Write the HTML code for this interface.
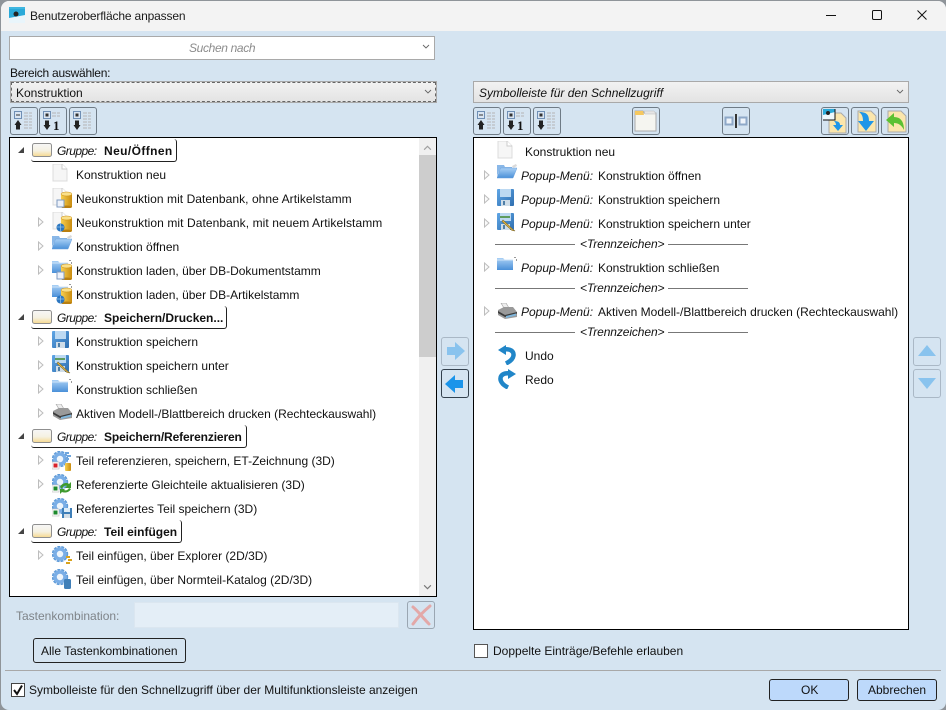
<!DOCTYPE html>
<html lang="de"><head><meta charset="utf-8"><title>Benutzeroberfläche anpassen</title>
<style>
html,body{margin:0;padding:0;width:946px;height:710px;overflow:hidden;background:#8f9499}
#w{position:absolute;left:1px;top:1px;width:945px;height:709px;background:#d5e4f1;border-radius:8px 8px 8px 8px;overflow:hidden}
#p{position:absolute;left:-1px;top:-1px;width:946px;height:710px}
#p div,#p span,#p svg{position:absolute}
.t{white-space:pre;font:12px/16px "Liberation Sans",sans-serif;color:#111;height:16px}
.i{font-style:italic}.b{font-weight:bold}
.g{letter-spacing:-.55px}
.btn{box-sizing:border-box;border:1px solid #6f7b86;border-radius:3px;width:28px;height:28px;top:107px}
.sep{height:1px;background:#777}
</style></head><body>
<svg width="0" height="0" style="position:absolute">
<defs>
<linearGradient id="gb" x1="0" y1="0" x2="0" y2="1"><stop offset="0" stop-color="#a9d0f5"/><stop offset="1" stop-color="#4a90d8"/></linearGradient>
<linearGradient id="gy" x1="0" y1="0" x2="1" y2="0"><stop offset="0" stop-color="#f8d050"/><stop offset="1" stop-color="#c98c10"/></linearGradient>
<linearGradient id="gf" x1="0" y1="0" x2="0" y2="1"><stop offset="0" stop-color="#f7f7f7"/><stop offset=".55" stop-color="#f5f1e2"/><stop offset="1" stop-color="#f6d98e"/></linearGradient>
<linearGradient id="gfl" x1="0" y1="0" x2="1" y2="1"><stop offset="0" stop-color="#5fa6e6"/><stop offset="1" stop-color="#2f6fb0"/></linearGradient>
<symbol id="doc" viewBox="0 0 20 20"><path d="M1 0H10L15 5V17H1Z" fill="#f6f6f6" stroke="#dcdcdc"/><path d="M10 0V5H15" fill="#fff" stroke="#ccc"/></symbol>
<symbol id="cyl" viewBox="0 0 20 20"><rect x="9" y="6" width="11" height="13" fill="url(#gy)"/><ellipse cx="14.500" cy="6" rx="5.500" ry="2" fill="#fae08a" stroke="#c98c10" stroke-width=".5"/><ellipse cx="14.500" cy="19" rx="5.500" ry="1.500" fill="#b97f10"/></symbol>
<symbol id="mini" viewBox="0 0 20 20"><rect x="5" y="12" width="7" height="7" fill="#eef2fa" stroke="#7f9ac0"/></symbol>
<symbol id="ball" viewBox="0 0 20 20"><circle cx="8.500" cy="15.500" r="4" fill="#2b76c0"/><path d="M5 15h7M8.500 12v7" stroke="#8fc0ea" stroke-width=".8"/></symbol>
<symbol id="fo" viewBox="0 0 20 20"><path d="M0 1H7L8 3H15V5H3L0 12Z" fill="#8ab8e8"/><path d="M3.500 4H20L16 14H0Z" fill="url(#gb)" stroke="#6aa0dc" stroke-width=".5"/><path d="M15 2L19 0 20 2 16 4Z" fill="#d9d9d9"/></symbol>
<symbol id="fb" viewBox="0 0 20 20"><path d="M0 1H6L8 3H16V13H0Z" fill="url(#gb)"/><path d="M0 3H16" stroke="#cfe4f8"/><path d="M17 0h2v1h-2zM19 2h1v2h-1z" fill="#999"/></symbol>
<symbol id="fl" viewBox="0 0 20 20"><rect x="0" y="0" width="17" height="17" rx="1" fill="url(#gfl)"/><rect x="3" y="0" width="11" height="8" fill="#bcd9f2"/><rect x="4" y="11" width="9" height="6" fill="#cfdde8"/><rect x="6" y="12" width="2" height="4" fill="#4f7fa8"/></symbol>
<symbol id="pen" viewBox="0 0 20 20"><path d="M6 7L16 16.500 18 18 15 17.500 5 8.500Z" fill="#e5b945" stroke="#7f6a30" stroke-width=".6"/><path d="M3 3H13V5H3Z" fill="#5e9c5e"/></symbol>
<symbol id="pr" viewBox="0 0 20 20"><path d="M4 0L9 0 12 5H7Z" fill="#eee" stroke="#aaa" stroke-width=".7"/><path d="M1 7L7 4H16L20 9V14L8 16 1 12Z" fill="#9a9a9a"/><path d="M1 8L8 12 20 9 20 10.500 8 14 1 10Z" fill="#3c3c3c"/><path d="M9 13L19 10.500V12.500L9 15Z" fill="#7fb6dc"/></symbol>
<symbol id="gear" viewBox="0 0 20 20"><circle cx="8" cy="8" r="7.400" fill="none" stroke="#5f9bd8" stroke-width="1.600" stroke-dasharray="3 1"/><circle cx="8" cy="8" r="5" fill="none" stroke="#7aaee6" stroke-width="3.600"/><circle cx="8" cy="8" r="3" fill="#eef5fb"/></symbol>
<symbol id="redR" viewBox="0 0 20 20"><rect x="0" y="11" width="7" height="7" fill="#fff" stroke="#bbb" stroke-width=".6"/><rect x="1.500" y="12.500" width="4" height="4" fill="#d8232a"/></symbol>
<symbol id="grnR" viewBox="0 0 20 20"><rect x="0" y="11" width="7" height="7" fill="#fff" stroke="#bbb" stroke-width=".6"/><rect x="1.500" y="12.500" width="4" height="4" fill="#1e8a2e"/></symbol>
<symbol id="grp" viewBox="0 0 20 14"><rect x=".5" y=".5" width="19" height="13" rx="2" fill="url(#gf)" stroke="#8f8f8f"/></symbol>
<symbol id="tri" viewBox="0 0 8 10"><path d="M1.500 1L6 5 1.500 9Z" fill="#fafafa" stroke="#bdbdbd"/></symbol>
<symbol id="tro" viewBox="0 0 8 8"><path d="M7 1V7H1Z" fill="#444"/></symbol>
<symbol id="chev" viewBox="0 0 8 5"><path d="M1 1L4 4 7 1" fill="none" stroke="#666" stroke-width=".9"/></symbol>
<symbol id="tb1" viewBox="0 0 28 28"><rect x="4.500" y="4.500" width="7" height="7" fill="#d9e5f2" stroke="#6f8fb5"/><rect x="6" y="7.500" width="4" height="1" fill="#333"/><path d="M14 6h8M14 9h8M14 12h8M14 15h8M14 18h8M14 21h8" stroke="#b5b5b5" stroke-dasharray="4 1"/><path d="M8 13L11.500 18H10V22.500H6V18H4.500Z" fill="#222"/></symbol>
<symbol id="tb2" viewBox="0 0 28 28"><rect x="4.500" y="4.500" width="7" height="7" fill="#d9e5f2" stroke="#6f8fb5"/><rect x="6.500" y="6.500" width="3" height="3" fill="#333"/><path d="M13 6h8M13 9h8" stroke="#b5b5b5" stroke-dasharray="4 1"/><path d="M8 23L11.500 18H10V13.500H6V18H4.500Z" fill="#222"/><text x="14" y="23" font-family="Liberation Serif" font-weight="bold" font-size="13" fill="#111">1</text></symbol>
<symbol id="tb3" viewBox="0 0 28 28"><rect x="4.500" y="4.500" width="7" height="7" fill="#d9e5f2" stroke="#6f8fb5"/><rect x="6.500" y="6.500" width="3" height="3" fill="#333"/><path d="M14 6h8M14 9h8M14 12h8M14 15h8M14 18h8M14 21h8" stroke="#b5b5b5" stroke-dasharray="4 1"/><path d="M8 23L11.500 18H10V13.500H6V18H4.500Z" fill="#222"/></symbol>
<symbol id="arrR" viewBox="0 0 22 20"><path d="M3 6H11V1L21 10 11 19V14H3Z" fill="#1a94ea"/></symbol>
<symbol id="arrL" viewBox="0 0 22 20"><path d="M19 6H11V1L1 10 11 19V14H19Z" fill="#1a94ea"/></symbol>
<symbol id="lines" viewBox="0 0 20 20"><path d="M13 1h4v2h-4zM15 4h4v2h-4zM13 7h4v2h-4z" fill="#6fa6de"/></symbol>
</defs></svg>

<div id="w"><div id="p">
<!-- title bar -->
<div style="left:0;top:0;width:946px;height:31px;background:#f3f3f3"></div>
<svg style="left:9px;top:7px" width="16" height="16" viewBox="0 0 16 16"><rect width="16" height="16" fill="#2aa9d8"/><path d="M0 11L16 8V16H0Z" fill="#e9f5fb"/><circle cx="7" cy="7" r="2.500" fill="#222"/><path d="M0 0H16V2H0Z" fill="#3fb6e0"/></svg>
<span class="t" style="left:30px;top:8px;color:#1a1a1a;letter-spacing:-.15px">Benutzeroberfläche anpassen</span>
<svg style="left:826px;top:10px" width="102" height="12" viewBox="0 0 102 12"><path d="M0 5.500H10" stroke="#111"/><rect x="46.500" y=".5" width="9" height="9" rx="1.200" fill="none" stroke="#111"/><path d="M91.500 .5L100.500 9.500M100.500 .5L91.500 9.500" stroke="#111" stroke-width="1"/></svg>

<!-- search -->
<div style="left:9px;top:36px;width:424px;height:22px;background:#fff;border:1px solid #a9a9a9"></div>
<span class="t i" style="left:189px;top:40px;color:#8c8c8c;letter-spacing:-.35px">Suchen nach</span>
<svg style="left:422px;top:44px" width="8" height="5"><use href="#chev"/></svg>

<span class="t" style="left:10px;top:65px;letter-spacing:-.25px">Bereich auswählen:</span>
<!-- combo left -->
<div style="left:10px;top:81px;width:425px;height:20px;background:linear-gradient(#f2f2f2,#e3e3e3);border:1px solid #a9a9a9"></div>
<div style="left:11px;top:82px;width:423px;height:18px;border:1px dashed #666;box-sizing:content-box"></div>
<span class="t" style="left:16px;top:85px">Konstruktion</span>
<svg style="left:424px;top:89px" width="8" height="5"><use href="#chev"/></svg>

<!-- toolbar left -->
<div class="btn" style="left:10px"></div><svg style="left:10px;top:107px" width="28" height="28"><use href="#tb1"/></svg>
<div class="btn" style="left:39px"></div><svg style="left:39px;top:107px" width="28" height="28"><use href="#tb2"/></svg>
<div class="btn" style="left:69px"></div><svg style="left:69px;top:107px" width="28" height="28"><use href="#tb3"/></svg>

<!-- left tree -->
<div style="left:9px;top:137px;width:426px;height:458px;background:#fff;border:1px solid #000"></div>
<div style="left:419px;top:138px;width:17px;height:458px;background:#f0f0f0"></div>
<div style="left:419px;top:155px;width:17px;height:202px;background:#cdcdcd"></div>
<svg style="left:423px;top:145px" width="9" height="6" viewBox="0 0 8 5"><path d="M1 4L4 1 7 4" fill="none" stroke="#a0a0a0" stroke-width="1"/></svg>
<svg style="left:423px;top:584px" width="9" height="6" viewBox="0 0 8 5"><path d="M1 1L4 4 7 1" fill="none" stroke="#777" stroke-width="1"/></svg>

<!-- Group 1 -->
<svg style="left:17px;top:146px" width="8" height="8"><use href="#tro"/></svg>
<div style="left:31px;top:139px;width:145px;height:22px;border:1px solid #222;border-width:0 1px 1px 0;border-radius:0 3px 3px 3px"></div>
<svg style="left:32px;top:143px" width="20" height="14"><use href="#grp"/></svg>
<span class="t i g" style="left:57px;top:143px">Gruppe:</span><span class="t b" style="left:104px;top:143px;letter-spacing:.4px">Neu/Öffnen</span>

<svg style="left:52px;top:164px" width="20" height="20"><use href="#doc"/></svg>
<span class="t" style="left:76px;top:167px">Konstruktion neu</span>

<svg style="left:52px;top:188px" width="20" height="20"><use href="#doc"/><use href="#cyl"/><use href="#mini"/></svg>
<span class="t" style="left:76px;top:191px;letter-spacing:.06px">Neukonstruktion mit Datenbank, ohne Artikelstamm</span>

<svg style="left:37px;top:217px" width="8" height="10"><use href="#tri"/></svg>
<svg style="left:52px;top:212px" width="20" height="20"><use href="#doc"/><use href="#cyl"/><use href="#ball"/></svg>
<span class="t" style="left:76px;top:215px;letter-spacing:.08px">Neukonstruktion mit Datenbank, mit neuem Artikelstamm</span>

<svg style="left:37px;top:241px" width="8" height="10"><use href="#tri"/></svg>
<svg style="left:52px;top:235px" width="20" height="20"><use href="#fo"/></svg>
<span class="t" style="left:76px;top:239px">Konstruktion öffnen</span>

<svg style="left:37px;top:265px" width="8" height="10"><use href="#tri"/></svg>
<svg style="left:52px;top:260px" width="20" height="20"><use href="#fb"/><use href="#cyl"/><use href="#mini"/></svg>
<span class="t" style="left:76px;top:263px">Konstruktion laden, über DB-Dokumentstamm</span>

<svg style="left:52px;top:284px" width="20" height="20"><use href="#fb"/><use href="#cyl"/><use href="#ball"/></svg>
<span class="t" style="left:76px;top:287px">Konstruktion laden, über DB-Artikelstamm</span>

<!-- Group 2 -->
<svg style="left:17px;top:313px" width="8" height="8"><use href="#tro"/></svg>
<div style="left:31px;top:306px;width:195px;height:22px;border:1px solid #222;border-width:0 1px 1px 0;border-radius:0 3px 3px 3px"></div>
<svg style="left:32px;top:310px" width="20" height="14"><use href="#grp"/></svg>
<span class="t i g" style="left:57px;top:310px">Gruppe:</span><span class="t b" style="left:104px;top:310px">Speichern/Drucken...</span>

<svg style="left:37px;top:336px" width="8" height="10"><use href="#tri"/></svg>
<svg style="left:52px;top:331px" width="20" height="20"><use href="#fl"/></svg>
<span class="t" style="left:76px;top:334px">Konstruktion speichern</span>

<svg style="left:37px;top:360px" width="8" height="10"><use href="#tri"/></svg>
<svg style="left:52px;top:355px" width="20" height="20"><use href="#fl"/><use href="#pen"/></svg>
<span class="t" style="left:76px;top:358px">Konstruktion speichern unter</span>

<svg style="left:37px;top:384px" width="8" height="10"><use href="#tri"/></svg>
<svg style="left:52px;top:379px" width="20" height="20"><use href="#fb"/></svg>
<span class="t" style="left:76px;top:382px">Konstruktion schließen</span>

<svg style="left:37px;top:408px" width="8" height="10"><use href="#tri"/></svg>
<svg style="left:52px;top:404px" width="20" height="20"><use href="#pr"/></svg>
<span class="t" style="left:76px;top:406px">Aktiven Modell-/Blattbereich drucken (Rechteckauswahl)</span>

<!-- Group 3 -->
<svg style="left:17px;top:432px" width="8" height="8"><use href="#tro"/></svg>
<div style="left:31px;top:425px;width:215px;height:22px;border:1px solid #222;border-width:0 1px 1px 0;border-radius:0 3px 3px 3px"></div>
<svg style="left:32px;top:429px" width="20" height="14"><use href="#grp"/></svg>
<span class="t i g" style="left:57px;top:429px">Gruppe:</span><span class="t b" style="left:104px;top:429px;letter-spacing:-.13px">Speichern/Referenzieren</span>

<svg style="left:37px;top:455px" width="8" height="10"><use href="#tri"/></svg>
<svg style="left:52px;top:451px" width="20" height="20"><use href="#gear"/><use href="#redR"/><use href="#lines"/><rect x="13" y="12" width="6" height="8" rx="1" fill="url(#gy)"/></svg>
<span class="t" style="left:76px;top:453px">Teil referenzieren, speichern, ET-Zeichnung (3D)</span>

<svg style="left:37px;top:479px" width="8" height="10"><use href="#tri"/></svg>
<svg style="left:52px;top:474px" width="20" height="20"><use href="#gear"/><use href="#grnR"/><path d="M8 13C10 9 15 8 17 10L19 8V14H13L15 12C13 11 11 12 10 15ZM19 15C17 19 12 19 10 18L8 20V15H13L12 16C14 17 16 16 17 14Z" fill="#3f9a2e"/></svg>
<span class="t" style="left:76px;top:477px">Referenzierte Gleichteile aktualisieren (3D)</span>

<svg style="left:52px;top:498px" width="20" height="20"><use href="#gear"/><use href="#grnR"/><rect x="10" y="10" width="10" height="10" fill="#3f7fb8"/><rect x="12" y="10" width="6" height="4" fill="#dcecf8"/><rect x="12" y="16" width="6" height="4" fill="#d4dfe8"/></svg>
<span class="t" style="left:76px;top:501px">Referenziertes Teil speichern (3D)</span>

<!-- Group 4 -->
<svg style="left:17px;top:527px" width="8" height="8"><use href="#tro"/></svg>
<div style="left:31px;top:520px;width:150px;height:22px;border:1px solid #222;border-width:0 1px 1px 0;border-radius:0 3px 3px 3px"></div>
<svg style="left:32px;top:524px" width="20" height="14"><use href="#grp"/></svg>
<span class="t i g" style="left:57px;top:524px">Gruppe:</span><span class="t b" style="left:104px;top:524px">Teil einfügen</span>

<svg style="left:37px;top:550px" width="8" height="10"><use href="#tri"/></svg>
<svg style="left:52px;top:546px" width="20" height="20"><use href="#gear"/><path d="M14 10h4v2h-4zM16 13h4v2h-4zM14 16h4v2h-4z" fill="#d9a21c"/></svg>
<span class="t" style="left:76px;top:548px">Teil einfügen, über Explorer (2D/3D)</span>

<svg style="left:52px;top:569px" width="20" height="20"><use href="#gear"/><rect x="12" y="10" width="7" height="10" rx="1.500" fill="#3f7fb8"/></svg>
<span class="t" style="left:76px;top:572px">Teil einfügen, über Normteil-Katalog (2D/3D)</span>

<!-- shortcut -->
<span class="t" style="left:16px;top:608px;color:#7f8489">Tastenkombination:</span>
<div style="left:134px;top:602px;width:263px;height:24px;background:#e4eef7;border:1px solid #dbe6f0"></div>
<div style="left:407px;top:601px;width:26px;height:26px;border:1px solid #9aa6b2;border-radius:3px;background:#d5e4f1"></div>
<svg style="left:409px;top:603px" width="24" height="24" viewBox="0 0 24 24"><path d="M4 4C9 8 14 15 20 21M21 3C15 8 9 14 4 21" fill="none" stroke="#e3a8a8" stroke-width="3" stroke-linecap="round"/></svg>

<div style="left:33px;top:638px;width:151px;height:23px;border:1px solid #222;border-radius:3px;background:#d5e4f1"></div>
<span class="t" style="left:41px;top:643px">Alle Tastenkombinationen</span>

<!-- mid arrows -->
<div style="left:441px;top:337px;width:26px;height:27px;border:1px solid #aab8c6;border-radius:3px"></div>
<svg style="left:444px;top:341px;opacity:.4" width="22" height="20"><use href="#arrR"/></svg>
<div style="left:441px;top:369px;width:26px;height:27px;border:1px solid #33404d;border-radius:3px"></div>
<svg style="left:444px;top:374px" width="22" height="20"><use href="#arrL"/></svg>

<!-- right combo -->
<div style="left:473px;top:81px;width:434px;height:20px;background:linear-gradient(#f2f2f2,#e3e3e3);border:1px solid #a9a9a9"></div>
<span class="t i" style="left:479px;top:85px">Symbolleiste für den Schnellzugriff</span>
<svg style="left:896px;top:89px" width="8" height="5"><use href="#chev"/></svg>

<!-- right toolbar -->
<div class="btn" style="left:473px"></div><svg style="left:473px;top:107px" width="28" height="28"><use href="#tb1"/></svg>
<div class="btn" style="left:503px"></div><svg style="left:503px;top:107px" width="28" height="28"><use href="#tb2"/></svg>
<div class="btn" style="left:533px"></div><svg style="left:533px;top:107px" width="28" height="28"><use href="#tb3"/></svg>
<div class="btn" style="left:632px"></div>
<svg style="left:632px;top:107px" width="28" height="28" viewBox="0 0 28 28"><path d="M3 4H11L12 6H24V24H3Z" fill="#f5f5f0" stroke="#aaa"/><path d="M3 4H11L12 8H3Z" fill="#f5c860"/><path d="M12 4H22L24 7H13Z" fill="#e5e5e5" stroke="#bbb" stroke-width=".5"/></svg>
<div class="btn" style="left:722px"></div>
<svg style="left:722px;top:107px" width="28" height="28" viewBox="0 0 28 28"><rect x="3.500" y="10.500" width="7" height="7" fill="#eef3fa" stroke="#8ea8c8" stroke-width="2"/><rect x="17.500" y="10.500" width="7" height="7" fill="#eef3fa" stroke="#8ea8c8" stroke-width="2"/><rect x="13" y="7" width="2" height="14" fill="#333"/></svg>
<div class="btn" style="left:821px"></div>
<svg style="left:821px;top:107px" width="28" height="28" viewBox="0 0 28 28"><path d="M8 6H20L25 11V26H8Z" fill="#fbe6ac" stroke="#aaa"/><rect x="2" y="2" width="12" height="11" fill="#2aa9d8"/><path d="M2 8L14 5V13H2Z" fill="#eef8fc"/><circle cx="7" cy="6" r="2" fill="#222"/><path d="M2 13H14V2" fill="none" stroke="#111"/><path d="M13 14C18 14 19 16 19 18H22L17 24 12 18H15C15 16 14 15 13 14Z" fill="#1f96e8"/></svg>
<div class="btn" style="left:851px"></div>
<svg style="left:851px;top:107px" width="28" height="28" viewBox="0 0 28 28"><path d="M7 4H20L25 9V25H7Z" fill="#fbe6ac" stroke="#aaa"/><path d="M8 5C16 5 18 8 18 14H23L15 24 7 14H12C12 10 11 7 8 5Z" fill="#1f96e8"/></svg>
<div class="btn" style="left:881px"></div>
<svg style="left:881px;top:107px" width="28" height="28" viewBox="0 0 28 28"><path d="M7 4H20L25 9V25H7Z" fill="#fbe6ac" stroke="#aaa"/><path d="M5 13L13 6V10C20 10 23 15 23 23 21 19 18 16 13 16V20Z" fill="#5cc132"/></svg>

<!-- right tree -->
<div style="left:473px;top:137px;width:434px;height:491px;background:#fff;border:1px solid #000"></div>

<svg style="left:497px;top:141px" width="20" height="20"><use href="#doc"/></svg>
<span class="t" style="left:525px;top:144px">Konstruktion neu</span>

<svg style="left:483px;top:170px" width="8" height="10"><use href="#tri"/></svg>
<svg style="left:497px;top:164px" width="20" height="20"><use href="#fo"/></svg>
<span class="t i" style="left:521px;top:168px">Popup-Menü:</span><span class="t" style="left:598px;top:168px">Konstruktion öffnen</span>

<svg style="left:483px;top:194px" width="8" height="10"><use href="#tri"/></svg>
<svg style="left:497px;top:189px" width="20" height="20"><use href="#fl"/></svg>
<span class="t i" style="left:521px;top:192px">Popup-Menü:</span><span class="t" style="left:598px;top:192px">Konstruktion speichern</span>

<svg style="left:483px;top:218px" width="8" height="10"><use href="#tri"/></svg>
<svg style="left:497px;top:213px" width="20" height="20"><use href="#fl"/><use href="#pen"/></svg>
<span class="t i" style="left:521px;top:216px">Popup-Menü:</span><span class="t" style="left:598px;top:216px">Konstruktion speichern unter</span>

<div class="sep" style="left:495px;top:244px;width:80px"></div>
<span class="t i" style="left:580px;top:236px;letter-spacing:-.1px">&lt;Trennzeichen&gt;</span>
<div class="sep" style="left:668px;top:244px;width:80px"></div>

<svg style="left:483px;top:262px" width="8" height="10"><use href="#tri"/></svg>
<svg style="left:497px;top:257px" width="20" height="20"><use href="#fb"/></svg>
<span class="t i" style="left:521px;top:260px">Popup-Menü:</span><span class="t" style="left:598px;top:260px">Konstruktion schließen</span>

<div class="sep" style="left:495px;top:288px;width:80px"></div>
<span class="t i" style="left:580px;top:280px;letter-spacing:-.1px">&lt;Trennzeichen&gt;</span>
<div class="sep" style="left:668px;top:288px;width:80px"></div>

<svg style="left:483px;top:306px" width="8" height="10"><use href="#tri"/></svg>
<svg style="left:497px;top:303px" width="20" height="20"><use href="#pr"/></svg>
<span class="t i" style="left:521px;top:304px">Popup-Menü:</span><span class="t" style="left:598px;top:304px">Aktiven Modell-/Blattbereich drucken (Rechteckauswahl)</span>

<div class="sep" style="left:495px;top:332px;width:80px"></div>
<span class="t i" style="left:580px;top:324px;letter-spacing:-.1px">&lt;Trennzeichen&gt;</span>
<div class="sep" style="left:668px;top:332px;width:80px"></div>

<svg style="left:498px;top:345px" width="18" height="20" viewBox="0 0 18 20"><path d="M0 5L8 0V10Z" fill="#2186c8"/><path d="M6 4.500C12 3.500 16 6 15.500 10.500 15 14 12 16.500 8 18.500" fill="none" stroke="#2186c8" stroke-width="4.500"/></svg>
<span class="t" style="left:525px;top:348px">Undo</span>
<svg style="left:498px;top:369px" width="18" height="20" viewBox="0 0 18 20"><path d="M18 5L10 0V10Z" fill="#2186c8"/><path d="M12 4.500C6 3.500 2 6 2.500 10.500 3 14 6 16.500 10 18.500" fill="none" stroke="#2186c8" stroke-width="4.500"/></svg>
<span class="t" style="left:525px;top:372px">Redo</span>

<!-- up/down -->
<div style="left:913px;top:337px;width:26px;height:27px;border:1px solid #aab8c6;border-radius:3px"></div>
<svg style="left:916px;top:341px;opacity:.4" width="22" height="20" viewBox="0 0 22 20"><path d="M2 15L11 4 20 15Z" fill="#1a94ea"/></svg>
<div style="left:913px;top:369px;width:26px;height:27px;border:1px solid #aab8c6;border-radius:3px"></div>
<svg style="left:916px;top:373px;opacity:.4" width="22" height="20" viewBox="0 0 22 20"><path d="M2 5L11 16 20 5Z" fill="#1a94ea"/></svg>

<!-- checkboxes -->
<div style="left:474px;top:644px;width:12px;height:12px;background:#fff;border:1px solid #555"></div>
<span class="t" style="left:493px;top:643px">Doppelte Einträge/Befehle erlauben</span>

<div style="left:5px;top:670px;width:936px;height:1px;background:#a8a8a8"></div>

<div style="left:11px;top:683px;width:12px;height:12px;background:#fff;border:1px solid #444"></div>
<svg style="left:12px;top:684px" width="12" height="12" viewBox="0 0 12 12"><path d="M2 6L5 10 10 1.500" fill="none" stroke="#111" stroke-width="2"/></svg>
<span class="t" style="left:29px;top:682px">Symbolleiste für den Schnellzugriff über der Multifunktionsleiste anzeigen</span>

<div style="left:769px;top:679px;width:78px;height:20px;background:#bdd9fb;border:1px solid #222;border-radius:3px"></div>
<span class="t" style="left:801px;top:682px">OK</span>
<div style="left:857px;top:679px;width:78px;height:20px;background:#bdd9fb;border:1px solid #222;border-radius:3px"></div>
<span class="t" style="left:868px;top:682px">Abbrechen</span>
</div></div>
</body></html>
